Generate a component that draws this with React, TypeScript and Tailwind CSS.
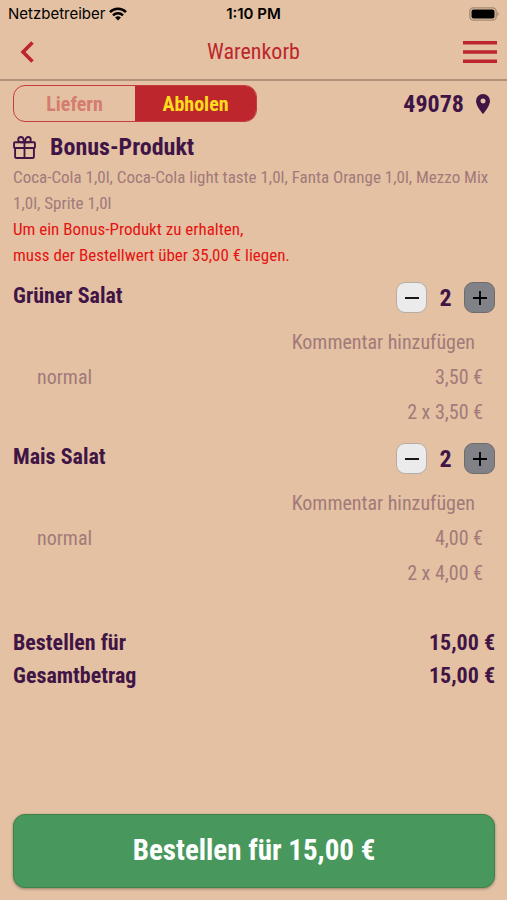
import { useState } from "react";

interface CartItem {
  id: string;
  name: string;
  variant: string;
  price: number;
  quantity: number;
}

const initialItems: CartItem[] = [
  { id: "gruener-salat", name: "Grüner Salat", variant: "normal", price: 3.5, quantity: 2 },
  { id: "mais-salat", name: "Mais Salat", variant: "normal", price: 4, quantity: 2 },
];

function euro(value: number) {
  return `${value.toFixed(2).replace(".", ",")} €`;
}

function StatusBar() {
  return (
    <div className="grid grid-cols-3 items-center h-7 px-2 font-['Inter','Liberation_Sans',sans-serif] text-black text-[15px]">
      <div className="flex items-center gap-1">
        <span>Netzbetreiber</span>
        <svg viewBox="0 0 18 14" className="w-[18px] h-3.5 shrink-0" fill="none" stroke="currentColor" strokeWidth="2.5">
          <path d="M1 5.1a11.4 11.4 0 0 1 16 0" />
          <path d="M4 8.3a7.2 7.2 0 0 1 10 0" />
          <path d="M9 13.5 6.1 10.6a4.1 4.1 0 0 1 5.8 0Z" fill="currentColor" stroke="none" />
        </svg>
      </div>
      <span className="text-center font-semibold">1:10 PM</span>
      <svg viewBox="0 0 30 14" className="w-[30px] h-3.5 justify-self-end">
        <rect x="0.8" y="0.8" width="26.4" height="12.4" rx="3.6" fill="none" stroke="#a38a73" strokeWidth="1.3" />
        <rect x="2.5" y="2.5" width="23" height="9" rx="2" fill="#000" />
        <path d="M28.3 5v4.2q1.5-.6 1.5-2.1T28.3 5Z" fill="#a38a73" />
      </svg>
    </div>
  );
}

function Header() {
  return (
    <header className="flex items-center justify-between h-[53px] px-2.5 pb-[3px] text-[#bd262c] border-b-2 border-[#b0937a]">
      <button aria-label="Zurück" className="w-[34px] h-8 flex items-center justify-center">
        <svg viewBox="0 0 14 22" className="w-3.5 h-[22px]" fill="none" stroke="currentColor" strokeWidth="3.6">
          <path d="M12.5 1.5 3 11l9.5 9.5" />
        </svg>
      </button>
      <h1 className="text-[22px] leading-7">Warenkorb</h1>
      <button aria-label="Menü" className="w-[34px] h-8 flex items-center justify-center">
        <svg viewBox="0 0 34 24" className="w-[34px] h-6" fill="currentColor">
          <path d="M0 1h34v3.6H0zM0 10.2h34v3.6H0zM0 19.4h34v3.6H0z" />
        </svg>
      </button>
    </header>
  );
}

export default function App() {
  const [items, setItems] = useState(initialItems);
  const [mode, setMode] = useState<"liefern" | "abholen">("abholen");

  const total = items.reduce((sum, item) => sum + item.price * item.quantity, 0);

  function changeQuantity(id: string, delta: number) {
    setItems((prev) =>
      prev
        .map((item) => (item.id === id ? { ...item, quantity: item.quantity + delta } : item))
        .filter((item) => item.quantity > 0)
    );
  }

  const active = "bg-[#bd262c] text-[#ffdc1e]";
  const inactive = "text-[#d47c6e]";

  return (
    <div className="min-h-screen flex flex-col bg-[#e4c1a3] text-[#401546] font-['Roboto_Condensed','Roboto',sans-serif]">
      <StatusBar />
      <Header />

      <main className="flex-1 flex flex-col pl-[13px] pr-3 pt-1 pb-3">
        {/* Liefern / Abholen */}
        <div className="flex items-center justify-between">
          <div className="grid grid-cols-2 w-[244px] h-[37px] rounded-xl border border-[#c43c3e] overflow-hidden text-xl font-bold">
            <button onClick={() => setMode("liefern")} className={mode === "liefern" ? active : inactive}>
              Liefern
            </button>
            <button onClick={() => setMode("abholen")} className={mode === "abholen" ? active : inactive}>
              Abholen
            </button>
          </div>
          <button className="flex items-center gap-3 pr-[5px] text-2xl font-bold">
            49078
            <svg viewBox="0 0 14 20" className="w-3.5 h-5" fill="currentColor">
              <path fillRule="evenodd" d="M7 0a7 7 0 0 0-7 7c0 5.2 7 13 7 13s7-7.8 7-13a7 7 0 0 0-7-7Zm0 4.5a2.5 2.5 0 1 1 0 5 2.5 2.5 0 0 1 0-5Z" />
            </svg>
          </button>
        </div>

        {/* Bonus-Produkt */}
        <section className="mt-2 text-[17px] leading-[26px]">
          <div className="flex items-center gap-3.5">
            <svg viewBox="0 0 22 22" className="w-[23px] h-[23px]" fill="none" stroke="currentColor" strokeWidth="1.8">
              <rect x="1" y="6" width="20" height="5.5" rx="1" />
              <path d="M2 11.5V19.5q0 1.5 1.5 1.5h15q1.5 0 1.5-1.5V11.5M11 6v15" />
              <path d="M11 6H7.5a2.5 2.5 0 1 1 2.5-2.5L11 6l1-2.5A2.5 2.5 0 1 1 14.5 6H11" />
            </svg>
            <h2 className="text-2xl leading-[34px] font-bold">Bonus-Produkt</h2>
          </div>
          <p className="text-[#a17a7a]">
            Coca-Cola 1,0l, Coca-Cola light taste 1,0l, Fanta Orange 1,0l, Mezzo Mix 1,0l, Sprite 1,0l
          </p>
          <p className="text-[#e51212]">
            Um ein Bonus-Produkt zu erhalten,
            <br />
            muss der Bestellwert über 35,00 € liegen.
          </p>
        </section>

        {/* Artikel */}
        <ul className="mt-3.5">
          {items.map((item) => (
            <li key={item.id} className="pb-[13px] text-xl text-[#a17a7a]">
              <div className="flex items-start justify-between text-[#401546] font-bold">
                <h3 className="text-[22px] leading-7">{item.name}</h3>
                <div className="flex items-center">
                  <button aria-label={`${item.name} weniger`} onClick={() => changeQuantity(item.id, -1)}
                    className="w-[31px] h-[31px] flex items-center justify-center rounded-[9px] border border-[#b5aea6] bg-[#ebebeb]">
                    <svg viewBox="0 0 14 14" className="w-3.5 h-3.5" stroke="#000" strokeWidth="1.8">
                      <path d="M0 7h14" />
                    </svg>
                  </button>
                  <span className="w-[37px] text-center text-2xl leading-7">{item.quantity}</span>
                  <button aria-label={`${item.name} mehr`} onClick={() => changeQuantity(item.id, 1)}
                    className="w-[31px] h-[31px] flex items-center justify-center rounded-[9px] border border-[#706c6c] bg-[#818287]">
                    <svg viewBox="0 0 14 14" className="w-3.5 h-3.5" stroke="#000" strokeWidth="1.8">
                      <path d="M0 7h14M7 0v14" />
                    </svg>
                  </button>
                </div>
              </div>
              <div className="mt-3 pl-6 pr-3 leading-[35px]">
                <button className="block ml-auto mr-2">Kommentar hinzufügen</button>
                <div className="flex justify-between">
                  <span>{item.variant}</span>
                  <span>{euro(item.price)}</span>
                </div>
                <p className="text-right">
                  {item.quantity} x {euro(item.price)}
                </p>
              </div>
            </li>
          ))}
        </ul>

        {/* Summe */}
        <dl className="mt-[22px] text-[22px] leading-[33px] font-bold">
          <div className="flex justify-between">
            <dt>Bestellen für</dt>
            <dd>{euro(total)}</dd>
          </div>
          <div className="flex justify-between">
            <dt>Gesamtbetrag</dt>
            <dd>{euro(total)}</dd>
          </div>
        </dl>

        <button className="mt-auto w-full h-[74px] rounded-xl border border-[#3f8148] bg-[#48985d] text-white text-[29px] font-bold shadow-[0_1px_3px_rgba(0,0,0,0.35)]">
          Bestellen für {euro(total)}
        </button>
      </main>
    </div>
  );
}
